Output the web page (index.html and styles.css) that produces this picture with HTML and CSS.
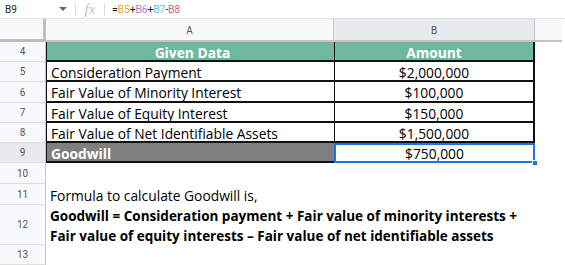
FILE: index.html
```html
<!DOCTYPE html>
<html>
<head>
<meta charset="utf-8">
<link rel="stylesheet" href="styles.css">
</head>
<body>
<div class="formula-bar">
  <div class="namebox">B9</div>
  <svg class="dd" width="8" height="5" viewBox="0 0 8 5"><path d="M0 0h8L4 4z" fill="#666"/></svg>
  <div class="sep"></div>
  <div class="fx">fx</div>
  <div class="sep"></div>
  <div class="formula">=<span class="r1">B5</span>+<span class="r2">B6</span>+<span class="r3">B7</span>-<span class="r4">B8</span></div>
</div>
<div class="sheet">
  <div class="corner"></div>
  <div class="colhead">A</div>
  <div class="colhead sel">B</div>
  <div class="colhead last"></div>

  <div class="rowhead">4</div>
  <div class="cell head a">Given Data</div>
  <div class="cell head b">Amount</div>
  <div class="rest"></div>

  <div class="rowhead">5</div>
  <div class="cell a">Consideration Payment</div>
  <div class="cell b">$2,000,000</div>
  <div class="rest"></div>

  <div class="rowhead">6</div>
  <div class="cell a">Fair Value of Minority Interest</div>
  <div class="cell b">$100,000</div>
  <div class="rest"></div>

  <div class="rowhead">7</div>
  <div class="cell a">Fair Value of Equity Interest</div>
  <div class="cell b">$150,000</div>
  <div class="rest"></div>

  <div class="rowhead">8</div>
  <div class="cell a">Fair Value of Net Identifiable Assets</div>
  <div class="cell b">$1,500,000</div>
  <div class="rest"></div>

  <div class="rowhead sel">9</div>
  <div class="cell a total">Goodwill</div>
  <div class="cell b active">$750,000<span class="handle"></span></div>
  <div class="rest"></div>

  <div class="rowhead">10</div>
  <div class="blank"></div>

  <div class="rowhead">11</div>
  <div class="note">Formula to calculate Goodwill is,</div>

  <div class="rowhead">12</div>
  <div class="note bold">Goodwill = Consideration payment + Fair value of minority interests +<br>Fair value of equity interests – Fair value of net identifiable assets</div>

  <div class="rowhead">13</div>
  <div class="blank"></div>
</div>
</body>
</html>
```
FILE: styles.css
```css
* { box-sizing: border-box; }
body {
  margin: 0;
  background: #fff;
  font-family: "Open Sans", "Liberation Sans", sans-serif;
  width: 565px;
  height: 265px;
  overflow: hidden;
}
.formula-bar {
  height: 19px;
  display: flex;
  align-items: center;
  border-bottom: 1px solid #e2e3e3;
  font-family: Roboto, "Liberation Sans", sans-serif;
  font-size: 10px;
  color: #222;
}
.namebox { width: 59px; padding-left: 5px; }
.dd { margin-right: 8px; margin-top: 1px; }
.sep { width: 1px; height: 13px; background: #dadce0; }
.fx {
  width: 28px;
  text-align: center;
  font-family: "Liberation Serif", serif;
  font-style: italic;
  font-size: 15px;
  color: #c4c4c4;
}
.formula { padding-left: 7px; font-size: 10.5px; letter-spacing: -0.2px; }
.r1 { color: #f4a539; }
.r2 { color: #a97fc7; }
.r3 { color: #67c2e0; }
.r4 { color: #d4657b; }

.sheet {
  display: grid;
  grid-template-columns: 46px 288px 201px 27px;
  grid-template-rows: 23px 20px 20px 21px 20px 20px 20px 21px 21px 40px 20px;
  font-size: 13.8px;
  color: #000;
}
.corner {
  background: #f8f9fa;
  border-right: 3px solid #bfbfbf;
  border-bottom: 3px solid #bfbfbf;
}
.colhead {
  background: #f8f9fa;
  border-right: 1px solid #c8c8c8;
  border-bottom: 2px solid #c4c4c4;
  display: flex;
  align-items: center;
  justify-content: center;
  font-family: Roboto, "Liberation Sans", sans-serif;
  font-size: 10px;
  color: #555;
  padding-top: 1px;
}
.colhead.sel { background: #e8eaed; }
.colhead.last { border-right: none; }
.rowhead {
  background: #f8f9fa;
  border-right: 1px solid #c8c8c8;
  border-bottom: 1px solid #dedede;
  display: flex;
  align-items: center;
  justify-content: center;
  font-family: Roboto, "Liberation Sans", sans-serif;
  font-size: 10px;
  color: #555;
}
.rowhead.sel { background: #e8eaed; }
.cell {
  display: flex;
  align-items: center;
  padding-top: 3px;
  border-bottom: 2px solid #111;
  white-space: nowrap;
  overflow: hidden;
  line-height: 1;
}
.cell.a { padding-left: 4px; border-left: 1px solid #111; }
.cell.b { justify-content: center; border-left: 1px solid #111; border-right: 2px solid #111; }
.cell.head {
  background: #6fb8a0;
  color: #fff;
  font-weight: 700;
  justify-content: center;
}
.cell.total {
  background: #7f7f7f;
  color: #fff;
  font-weight: 700;
}
.cell.active {
  position: relative;
  border: 2px solid #1a73e8;
  padding-top: 2px;
  overflow: visible;
}
.handle {
  position: absolute;
  right: -5px;
  bottom: -5px;
  width: 6px;
  height: 6px;
  background: #1a73e8;
  border: 1px solid #fff;
}
.blank { grid-column: 2 / 5; }
.note {
  grid-column: 2 / 5;
  padding-left: 4px;
  padding-top: 3px;
  display: flex;
  align-items: center;
  white-space: nowrap;
  line-height: 20px;
}
.note.bold { font-weight: 700; font-size: 13.5px; padding-top: 2px; }
```
